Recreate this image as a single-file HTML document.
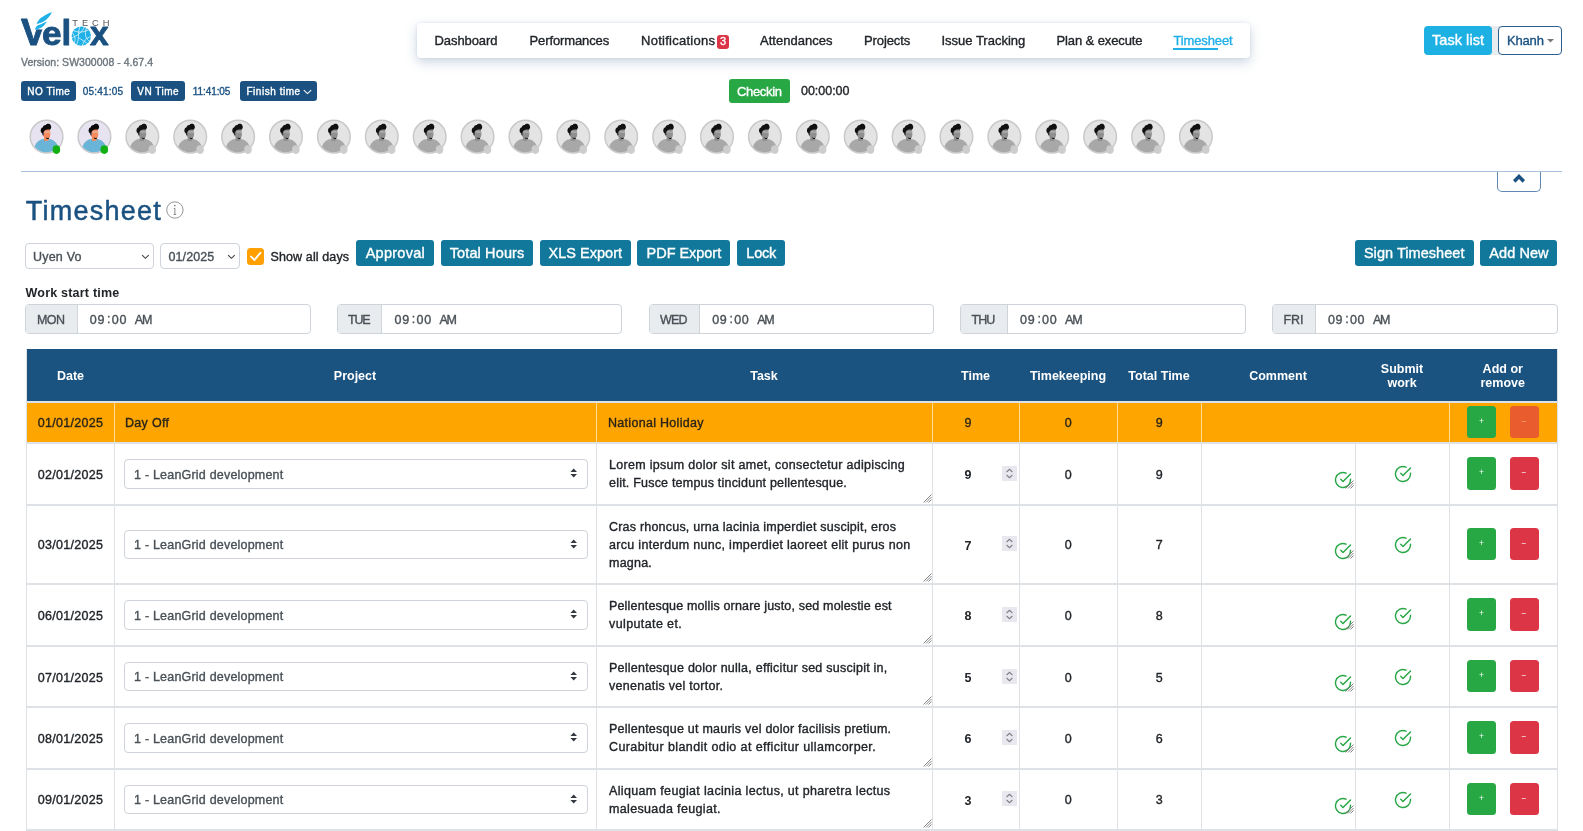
<!DOCTYPE html>
<html lang="en">
<head>
<meta charset="utf-8">
<title>Timesheet</title>
<style>
*{box-sizing:border-box}
html,body{margin:0;padding:0}
body{width:1583px;height:831px;overflow:hidden;position:relative;background:#fff;font-family:"Liberation Sans",sans-serif;font-size:12.5px;color:#212529;will-change:transform;-webkit-text-stroke:.36px currentColor}
.t{position:absolute;white-space:nowrap;display:block}
.abs{position:absolute}
.badge{position:absolute;background:#1a5180;border-radius:3px;height:20px;top:81px}
.btn{position:absolute;border-radius:3px;background:#12789b;color:#fff}
.sel{position:absolute;border:1px solid #ced4da;border-radius:4px;background:#fff}
.grp{position:absolute;top:304px;height:29.5px;border:1px solid #ced4da;border-radius:4px;background:#fff;overflow:hidden}
.grp i{position:absolute;left:0;top:0;bottom:0;background:#e9ecef;border-right:1px solid #ced4da}
</style>
</head>
<body>

<svg class="abs" style="left:16px;top:8px" width="100" height="44" viewBox="16 8 100 44" aria-label="Velox Tech">
<text transform="translate(21.08 45.35) scale(0.3738 0.3754)" font-family="Liberation Sans, sans-serif" font-weight="700" font-size="100" fill="#1a5180" stroke="#1a5180" stroke-width="2.40" stroke-linejoin="round">V</text>
<path d="M33.6 8 H56 V29.4 H33.6Z" fill="#fff"/>
<text transform="translate(41.94 45.22) scale(0.3521 0.3327)" font-family="Liberation Sans, sans-serif" font-weight="700" font-size="100" fill="#1a5180" stroke="#1a5180" stroke-width="2.63" stroke-linejoin="round">e</text>
<text transform="translate(61.51 45.35) scale(0.3481 0.3572)" font-family="Liberation Sans, sans-serif" font-weight="700" font-size="100" fill="#1a5180" stroke="#1a5180" stroke-width="2.55" stroke-linejoin="round">l</text>
<text transform="translate(90.12 45.35) scale(0.3346 0.3340)" font-family="Liberation Sans, sans-serif" font-weight="700" font-size="100" fill="#1a5180" stroke="#1a5180" stroke-width="2.69" stroke-linejoin="round">x</text>
<path d="M36.6 23.9 C38 19.5 43 15.5 52 12 C50 16 47 19.5 44 21.3 C41.5 22.8 39 23.6 36.6 23.9Z" fill="#1fb0e8"/>
<path d="M34.9 29.8 C35.4 27.5 36.5 26 38 25.2 C41 24.3 44 23.3 46.8 21.3 C45.5 24 44 26 42 27.2 C40 28.4 37.5 29.3 34.9 29.8Z" fill="#1fb0e8"/>
<circle cx="81.3" cy="36.1" r="9.7" fill="#1fb0e8"/>
<g stroke="#fff" stroke-width="0.75" fill="none" stroke-linecap="round" opacity=".9">
<path d="M73.5 30.5 C78 33 84 32.5 88.5 29.8"/><path d="M71.8 38 C77 35.5 81.5 33.5 84.5 27"/><path d="M79.8 26.6 C77.5 33 79.5 41 76.5 44.4"/><path d="M86.5 28 C84 34 86 40 89.8 41.2"/><path d="M82.5 45.6 C83.5 41 86 38 90.8 36.6"/><path d="M72.6 33 C75 36 76 40 74.2 43"/><path d="M79 38 C82 40 85 41.5 87.5 43.6"/>
</g>
<text x="72.3" y="25.5" font-family="Liberation Sans, sans-serif" font-size="9.3" fill="#5a5353" letter-spacing="3.97">TECH</text>
</svg>

<span class="t" style="left:21px;top:54.95px;height:14.7px;line-height:14.7px;font-size:10.5px;letter-spacing:0.027px;color:#6c757d;">Version: SW300008 - 4.67.4</span>
<div class="badge" style="left:21px;width:55.3px"></div>
<span class="t" style="left:27.3px;top:84.7px;height:14.0px;line-height:14.0px;font-size:10px;letter-spacing:0.508px;color:#fff;">NO Time</span>
<span class="t" style="left:82.8px;top:84.7px;height:14.0px;line-height:14.0px;font-size:10px;letter-spacing:0.196px;color:#1a5180;">05:41:05</span>
<div class="badge" style="left:131px;width:53.8px"></div>
<span class="t" style="left:137.2px;top:84.7px;height:14.0px;line-height:14.0px;font-size:10px;letter-spacing:0.526px;color:#fff;">VN Time</span>
<span class="t" style="left:192.8px;top:84.7px;height:14.0px;line-height:14.0px;font-size:10px;letter-spacing:-0.083px;color:#1a5180;">11:41:05</span>
<div class="badge" style="left:240px;width:76.6px"></div>
<span class="t" style="left:246.4px;top:84.7px;height:14.0px;line-height:14.0px;font-size:10px;letter-spacing:0.545px;color:#fff;">Finish time</span>
<svg class="abs" style="left:303px;top:88.6px" width="9" height="6" viewBox="0 0 9 6"><path d="M0.8 1.2 L4.5 4.6 L8.2 1.2" stroke="#fff" stroke-width="1.1" fill="none"/></svg>
<nav class="abs" style="left:417px;top:23px;width:833.3px;height:34.5px;background:#fff;border-radius:4px;box-shadow:0 4px 12px rgba(80,115,160,.30),0 0 3px rgba(80,115,160,.12)"></nav>
<a class="t" style="left:434.5px;top:32.2px;height:18.2px;line-height:18.2px;font-size:13px;letter-spacing:-0.075px;color:#212529;">Dashboard</a>
<a class="t" style="left:529.5px;top:32.2px;height:18.2px;line-height:18.2px;font-size:13px;letter-spacing:-0.107px;color:#212529;">Performances</a>
<a class="t" style="left:641px;top:32.2px;height:18.2px;line-height:18.2px;font-size:13px;letter-spacing:0.266px;color:#212529;">Notifications</a>
<a class="t" style="left:760px;top:32.2px;height:18.2px;line-height:18.2px;font-size:13px;letter-spacing:0.022px;color:#212529;">Attendances</a>
<a class="t" style="left:864px;top:32.2px;height:18.2px;line-height:18.2px;font-size:13px;letter-spacing:-0.102px;color:#212529;">Projects</a>
<a class="t" style="left:941.5px;top:32.2px;height:18.2px;line-height:18.2px;font-size:13px;letter-spacing:-0.005px;color:#212529;">Issue Tracking</a>
<a class="t" style="left:1056.5px;top:32.2px;height:18.2px;line-height:18.2px;font-size:13px;letter-spacing:-0.111px;color:#212529;">Plan &amp; execute</a>
<a class="t" style="left:1173.4px;top:32.2px;height:18.2px;line-height:18.2px;font-size:13px;letter-spacing:-0.114px;color:#1fb0e8;">Timesheet</a>
<div class="abs" style="left:1173.4px;top:48px;width:44.3px;height:1.5px;background:#1fb0e8"></div>
<div class="abs" style="left:717px;top:35px;width:11.8px;height:13.6px;background:#dc3545;border-radius:3px"></div>
<span class="t" style="left:719.9px;top:34.2px;height:15.4px;line-height:15.4px;font-size:11px;letter-spacing:0px;color:#fff;">3</span>
<div class="btn" style="left:729px;top:79.2px;width:61.3px;height:24px;background:#28a745"></div>
<span class="t" style="left:737px;top:82.7px;height:18.2px;line-height:18.2px;font-size:13px;letter-spacing:-0.328px;color:#fff;">Checkin</span>
<span class="t" style="left:801px;top:82.65px;height:17.5px;line-height:17.5px;font-size:12.5px;letter-spacing:-0.023px;color:#212529;">00:00:00</span>
<div class="abs" style="left:1488px;top:26px;width:12px;height:29px;background:#e9ecef"></div>
<div class="btn" style="left:1424px;top:26px;width:67.6px;height:29px;background:#1cb0e3;border-radius:4px"></div>
<span class="t" style="left:1432px;top:30.15px;height:20.3px;line-height:20.3px;font-size:14.5px;letter-spacing:0.054px;color:#fff;">Task list</span>
<div class="abs" style="left:1498.3px;top:26px;width:63.4px;height:29px;background:#fff;border:1px solid #2c5f8e;border-radius:4px"></div>
<span class="t" style="left:1506.9px;top:31.5px;height:18.2px;line-height:18.2px;font-size:13px;letter-spacing:-0.148px;color:#1a5180;">Khanh</span>
<svg class="abs" style="left:1547.3px;top:39px" width="7" height="4" viewBox="0 0 7 4"><path d="M0 0 H7 L3.5 3.6Z" fill="#777"/></svg>
<svg class="abs" style="left:0;top:110px" width="1583" height="56" viewBox="0 110 1583 56">
<g transform="translate(0.00 0)"><circle cx="46.55" cy="136.65" r="16.3" fill="#e8e3f1" stroke="#c9c9c9" stroke-width="1.5"/><path d="M34.6 146.5 C36.5 141.5 40 139.3 43.6 139 L49.2 139 C53 139.4 56.3 141.8 58.3 146.6 C55.5 150.4 51.5 152.3 46.55 152.3 C41.5 152.3 37.3 150.3 34.6 146.5Z" fill="#6ab4d8"/><path d="M42.3 129.5 C42.3 127.5 48.8 127 50 129.5 L50.4 134.5 C50.2 137 49 138.3 48.6 138.7 L48.8 140.2 C47.5 141.4 45 141.4 44 140.2 L44 137 C42.6 136 42 133 42.3 129.5Z" fill="#f58a5b"/><path d="M42 131 L43.6 131 L43.8 135.6 L42.4 135 Z" fill="#2b3a67"/><path d="M45.6 137.2 C46.8 138.2 48.2 138.3 49.2 137.4 L48.7 138.9 C47.6 139.3 46.4 138.9 45.6 137.2Z" fill="#0a0a0a"/><path d="M44.6 132 H50.6" stroke="#d9d3cf" stroke-width="0.9"/><path d="M40.9 132 C40.2 129.5 41.3 127.6 42.9 127.2 C43.2 125.6 44.7 124.9 45.8 125.1 C46.5 123.7 49.4 123.3 50.5 124.9 C51.8 126.4 51.3 128.7 49.9 129.7 C48 129.4 45.6 129.9 44.2 130.9 C43.6 131.8 43 132.8 42.2 133.6Z" fill="#0a0a0a"/><ellipse cx="56.4" cy="149.6" rx="3.8" ry="4.3" fill="#12b012"/></g>
<g transform="translate(47.89 0)"><circle cx="46.55" cy="136.65" r="16.3" fill="#e8e3f1" stroke="#c9c9c9" stroke-width="1.5"/><path d="M34.6 146.5 C36.5 141.5 40 139.3 43.6 139 L49.2 139 C53 139.4 56.3 141.8 58.3 146.6 C55.5 150.4 51.5 152.3 46.55 152.3 C41.5 152.3 37.3 150.3 34.6 146.5Z" fill="#6ab4d8"/><path d="M42.3 129.5 C42.3 127.5 48.8 127 50 129.5 L50.4 134.5 C50.2 137 49 138.3 48.6 138.7 L48.8 140.2 C47.5 141.4 45 141.4 44 140.2 L44 137 C42.6 136 42 133 42.3 129.5Z" fill="#f58a5b"/><path d="M42 131 L43.6 131 L43.8 135.6 L42.4 135 Z" fill="#2b3a67"/><path d="M45.6 137.2 C46.8 138.2 48.2 138.3 49.2 137.4 L48.7 138.9 C47.6 139.3 46.4 138.9 45.6 137.2Z" fill="#0a0a0a"/><path d="M44.6 132 H50.6" stroke="#d9d3cf" stroke-width="0.9"/><path d="M40.9 132 C40.2 129.5 41.3 127.6 42.9 127.2 C43.2 125.6 44.7 124.9 45.8 125.1 C46.5 123.7 49.4 123.3 50.5 124.9 C51.8 126.4 51.3 128.7 49.9 129.7 C48 129.4 45.6 129.9 44.2 130.9 C43.6 131.8 43 132.8 42.2 133.6Z" fill="#0a0a0a"/><ellipse cx="56.4" cy="149.6" rx="3.8" ry="4.3" fill="#12b012"/></g>
<g transform="translate(95.78 0)"><circle cx="46.55" cy="136.65" r="16.3" fill="#e4e4e4" stroke="#c9c9c9" stroke-width="1.5"/><path d="M34.6 146.5 C36.5 141.5 40 139.3 43.6 139 L49.2 139 C53 139.4 56.3 141.8 58.3 146.6 C55.5 150.4 51.5 152.3 46.55 152.3 C41.5 152.3 37.3 150.3 34.6 146.5Z" fill="#a8a8a8"/><path d="M42.3 129.5 C42.3 127.5 48.8 127 50 129.5 L50.4 134.5 C50.2 137 49 138.3 48.6 138.7 L48.8 140.2 C47.5 141.4 45 141.4 44 140.2 L44 137 C42.6 136 42 133 42.3 129.5Z" fill="#8f8f8f"/><path d="M42 131 L43.6 131 L43.8 135.6 L42.4 135 Z" fill="#3a3a3a"/><path d="M45.6 137.2 C46.8 138.2 48.2 138.3 49.2 137.4 L48.7 138.9 C47.6 139.3 46.4 138.9 45.6 137.2Z" fill="#111"/><path d="M44.6 132 H50.6" stroke="#c4c4c4" stroke-width="0.9"/><path d="M40.9 132 C40.2 129.5 41.3 127.6 42.9 127.2 C43.2 125.6 44.7 124.9 45.8 125.1 C46.5 123.7 49.4 123.3 50.5 124.9 C51.8 126.4 51.3 128.7 49.9 129.7 C48 129.4 45.6 129.9 44.2 130.9 C43.6 131.8 43 132.8 42.2 133.6Z" fill="#111"/><ellipse cx="56.4" cy="149.6" rx="3.8" ry="4.3" fill="#cdcdcd"/></g>
<g transform="translate(143.67 0)"><circle cx="46.55" cy="136.65" r="16.3" fill="#e4e4e4" stroke="#c9c9c9" stroke-width="1.5"/><path d="M34.6 146.5 C36.5 141.5 40 139.3 43.6 139 L49.2 139 C53 139.4 56.3 141.8 58.3 146.6 C55.5 150.4 51.5 152.3 46.55 152.3 C41.5 152.3 37.3 150.3 34.6 146.5Z" fill="#a8a8a8"/><path d="M42.3 129.5 C42.3 127.5 48.8 127 50 129.5 L50.4 134.5 C50.2 137 49 138.3 48.6 138.7 L48.8 140.2 C47.5 141.4 45 141.4 44 140.2 L44 137 C42.6 136 42 133 42.3 129.5Z" fill="#8f8f8f"/><path d="M42 131 L43.6 131 L43.8 135.6 L42.4 135 Z" fill="#3a3a3a"/><path d="M45.6 137.2 C46.8 138.2 48.2 138.3 49.2 137.4 L48.7 138.9 C47.6 139.3 46.4 138.9 45.6 137.2Z" fill="#111"/><path d="M44.6 132 H50.6" stroke="#c4c4c4" stroke-width="0.9"/><path d="M40.9 132 C40.2 129.5 41.3 127.6 42.9 127.2 C43.2 125.6 44.7 124.9 45.8 125.1 C46.5 123.7 49.4 123.3 50.5 124.9 C51.8 126.4 51.3 128.7 49.9 129.7 C48 129.4 45.6 129.9 44.2 130.9 C43.6 131.8 43 132.8 42.2 133.6Z" fill="#111"/><ellipse cx="56.4" cy="149.6" rx="3.8" ry="4.3" fill="#cdcdcd"/></g>
<g transform="translate(191.56 0)"><circle cx="46.55" cy="136.65" r="16.3" fill="#e4e4e4" stroke="#c9c9c9" stroke-width="1.5"/><path d="M34.6 146.5 C36.5 141.5 40 139.3 43.6 139 L49.2 139 C53 139.4 56.3 141.8 58.3 146.6 C55.5 150.4 51.5 152.3 46.55 152.3 C41.5 152.3 37.3 150.3 34.6 146.5Z" fill="#a8a8a8"/><path d="M42.3 129.5 C42.3 127.5 48.8 127 50 129.5 L50.4 134.5 C50.2 137 49 138.3 48.6 138.7 L48.8 140.2 C47.5 141.4 45 141.4 44 140.2 L44 137 C42.6 136 42 133 42.3 129.5Z" fill="#8f8f8f"/><path d="M42 131 L43.6 131 L43.8 135.6 L42.4 135 Z" fill="#3a3a3a"/><path d="M45.6 137.2 C46.8 138.2 48.2 138.3 49.2 137.4 L48.7 138.9 C47.6 139.3 46.4 138.9 45.6 137.2Z" fill="#111"/><path d="M44.6 132 H50.6" stroke="#c4c4c4" stroke-width="0.9"/><path d="M40.9 132 C40.2 129.5 41.3 127.6 42.9 127.2 C43.2 125.6 44.7 124.9 45.8 125.1 C46.5 123.7 49.4 123.3 50.5 124.9 C51.8 126.4 51.3 128.7 49.9 129.7 C48 129.4 45.6 129.9 44.2 130.9 C43.6 131.8 43 132.8 42.2 133.6Z" fill="#111"/><ellipse cx="56.4" cy="149.6" rx="3.8" ry="4.3" fill="#cdcdcd"/></g>
<g transform="translate(239.45 0)"><circle cx="46.55" cy="136.65" r="16.3" fill="#e4e4e4" stroke="#c9c9c9" stroke-width="1.5"/><path d="M34.6 146.5 C36.5 141.5 40 139.3 43.6 139 L49.2 139 C53 139.4 56.3 141.8 58.3 146.6 C55.5 150.4 51.5 152.3 46.55 152.3 C41.5 152.3 37.3 150.3 34.6 146.5Z" fill="#a8a8a8"/><path d="M42.3 129.5 C42.3 127.5 48.8 127 50 129.5 L50.4 134.5 C50.2 137 49 138.3 48.6 138.7 L48.8 140.2 C47.5 141.4 45 141.4 44 140.2 L44 137 C42.6 136 42 133 42.3 129.5Z" fill="#8f8f8f"/><path d="M42 131 L43.6 131 L43.8 135.6 L42.4 135 Z" fill="#3a3a3a"/><path d="M45.6 137.2 C46.8 138.2 48.2 138.3 49.2 137.4 L48.7 138.9 C47.6 139.3 46.4 138.9 45.6 137.2Z" fill="#111"/><path d="M44.6 132 H50.6" stroke="#c4c4c4" stroke-width="0.9"/><path d="M40.9 132 C40.2 129.5 41.3 127.6 42.9 127.2 C43.2 125.6 44.7 124.9 45.8 125.1 C46.5 123.7 49.4 123.3 50.5 124.9 C51.8 126.4 51.3 128.7 49.9 129.7 C48 129.4 45.6 129.9 44.2 130.9 C43.6 131.8 43 132.8 42.2 133.6Z" fill="#111"/><ellipse cx="56.4" cy="149.6" rx="3.8" ry="4.3" fill="#cdcdcd"/></g>
<g transform="translate(287.34 0)"><circle cx="46.55" cy="136.65" r="16.3" fill="#e4e4e4" stroke="#c9c9c9" stroke-width="1.5"/><path d="M34.6 146.5 C36.5 141.5 40 139.3 43.6 139 L49.2 139 C53 139.4 56.3 141.8 58.3 146.6 C55.5 150.4 51.5 152.3 46.55 152.3 C41.5 152.3 37.3 150.3 34.6 146.5Z" fill="#a8a8a8"/><path d="M42.3 129.5 C42.3 127.5 48.8 127 50 129.5 L50.4 134.5 C50.2 137 49 138.3 48.6 138.7 L48.8 140.2 C47.5 141.4 45 141.4 44 140.2 L44 137 C42.6 136 42 133 42.3 129.5Z" fill="#8f8f8f"/><path d="M42 131 L43.6 131 L43.8 135.6 L42.4 135 Z" fill="#3a3a3a"/><path d="M45.6 137.2 C46.8 138.2 48.2 138.3 49.2 137.4 L48.7 138.9 C47.6 139.3 46.4 138.9 45.6 137.2Z" fill="#111"/><path d="M44.6 132 H50.6" stroke="#c4c4c4" stroke-width="0.9"/><path d="M40.9 132 C40.2 129.5 41.3 127.6 42.9 127.2 C43.2 125.6 44.7 124.9 45.8 125.1 C46.5 123.7 49.4 123.3 50.5 124.9 C51.8 126.4 51.3 128.7 49.9 129.7 C48 129.4 45.6 129.9 44.2 130.9 C43.6 131.8 43 132.8 42.2 133.6Z" fill="#111"/><ellipse cx="56.4" cy="149.6" rx="3.8" ry="4.3" fill="#cdcdcd"/></g>
<g transform="translate(335.23 0)"><circle cx="46.55" cy="136.65" r="16.3" fill="#e4e4e4" stroke="#c9c9c9" stroke-width="1.5"/><path d="M34.6 146.5 C36.5 141.5 40 139.3 43.6 139 L49.2 139 C53 139.4 56.3 141.8 58.3 146.6 C55.5 150.4 51.5 152.3 46.55 152.3 C41.5 152.3 37.3 150.3 34.6 146.5Z" fill="#a8a8a8"/><path d="M42.3 129.5 C42.3 127.5 48.8 127 50 129.5 L50.4 134.5 C50.2 137 49 138.3 48.6 138.7 L48.8 140.2 C47.5 141.4 45 141.4 44 140.2 L44 137 C42.6 136 42 133 42.3 129.5Z" fill="#8f8f8f"/><path d="M42 131 L43.6 131 L43.8 135.6 L42.4 135 Z" fill="#3a3a3a"/><path d="M45.6 137.2 C46.8 138.2 48.2 138.3 49.2 137.4 L48.7 138.9 C47.6 139.3 46.4 138.9 45.6 137.2Z" fill="#111"/><path d="M44.6 132 H50.6" stroke="#c4c4c4" stroke-width="0.9"/><path d="M40.9 132 C40.2 129.5 41.3 127.6 42.9 127.2 C43.2 125.6 44.7 124.9 45.8 125.1 C46.5 123.7 49.4 123.3 50.5 124.9 C51.8 126.4 51.3 128.7 49.9 129.7 C48 129.4 45.6 129.9 44.2 130.9 C43.6 131.8 43 132.8 42.2 133.6Z" fill="#111"/><ellipse cx="56.4" cy="149.6" rx="3.8" ry="4.3" fill="#cdcdcd"/></g>
<g transform="translate(383.12 0)"><circle cx="46.55" cy="136.65" r="16.3" fill="#e4e4e4" stroke="#c9c9c9" stroke-width="1.5"/><path d="M34.6 146.5 C36.5 141.5 40 139.3 43.6 139 L49.2 139 C53 139.4 56.3 141.8 58.3 146.6 C55.5 150.4 51.5 152.3 46.55 152.3 C41.5 152.3 37.3 150.3 34.6 146.5Z" fill="#a8a8a8"/><path d="M42.3 129.5 C42.3 127.5 48.8 127 50 129.5 L50.4 134.5 C50.2 137 49 138.3 48.6 138.7 L48.8 140.2 C47.5 141.4 45 141.4 44 140.2 L44 137 C42.6 136 42 133 42.3 129.5Z" fill="#8f8f8f"/><path d="M42 131 L43.6 131 L43.8 135.6 L42.4 135 Z" fill="#3a3a3a"/><path d="M45.6 137.2 C46.8 138.2 48.2 138.3 49.2 137.4 L48.7 138.9 C47.6 139.3 46.4 138.9 45.6 137.2Z" fill="#111"/><path d="M44.6 132 H50.6" stroke="#c4c4c4" stroke-width="0.9"/><path d="M40.9 132 C40.2 129.5 41.3 127.6 42.9 127.2 C43.2 125.6 44.7 124.9 45.8 125.1 C46.5 123.7 49.4 123.3 50.5 124.9 C51.8 126.4 51.3 128.7 49.9 129.7 C48 129.4 45.6 129.9 44.2 130.9 C43.6 131.8 43 132.8 42.2 133.6Z" fill="#111"/><ellipse cx="56.4" cy="149.6" rx="3.8" ry="4.3" fill="#cdcdcd"/></g>
<g transform="translate(431.01 0)"><circle cx="46.55" cy="136.65" r="16.3" fill="#e4e4e4" stroke="#c9c9c9" stroke-width="1.5"/><path d="M34.6 146.5 C36.5 141.5 40 139.3 43.6 139 L49.2 139 C53 139.4 56.3 141.8 58.3 146.6 C55.5 150.4 51.5 152.3 46.55 152.3 C41.5 152.3 37.3 150.3 34.6 146.5Z" fill="#a8a8a8"/><path d="M42.3 129.5 C42.3 127.5 48.8 127 50 129.5 L50.4 134.5 C50.2 137 49 138.3 48.6 138.7 L48.8 140.2 C47.5 141.4 45 141.4 44 140.2 L44 137 C42.6 136 42 133 42.3 129.5Z" fill="#8f8f8f"/><path d="M42 131 L43.6 131 L43.8 135.6 L42.4 135 Z" fill="#3a3a3a"/><path d="M45.6 137.2 C46.8 138.2 48.2 138.3 49.2 137.4 L48.7 138.9 C47.6 139.3 46.4 138.9 45.6 137.2Z" fill="#111"/><path d="M44.6 132 H50.6" stroke="#c4c4c4" stroke-width="0.9"/><path d="M40.9 132 C40.2 129.5 41.3 127.6 42.9 127.2 C43.2 125.6 44.7 124.9 45.8 125.1 C46.5 123.7 49.4 123.3 50.5 124.9 C51.8 126.4 51.3 128.7 49.9 129.7 C48 129.4 45.6 129.9 44.2 130.9 C43.6 131.8 43 132.8 42.2 133.6Z" fill="#111"/><ellipse cx="56.4" cy="149.6" rx="3.8" ry="4.3" fill="#cdcdcd"/></g>
<g transform="translate(478.90 0)"><circle cx="46.55" cy="136.65" r="16.3" fill="#e4e4e4" stroke="#c9c9c9" stroke-width="1.5"/><path d="M34.6 146.5 C36.5 141.5 40 139.3 43.6 139 L49.2 139 C53 139.4 56.3 141.8 58.3 146.6 C55.5 150.4 51.5 152.3 46.55 152.3 C41.5 152.3 37.3 150.3 34.6 146.5Z" fill="#a8a8a8"/><path d="M42.3 129.5 C42.3 127.5 48.8 127 50 129.5 L50.4 134.5 C50.2 137 49 138.3 48.6 138.7 L48.8 140.2 C47.5 141.4 45 141.4 44 140.2 L44 137 C42.6 136 42 133 42.3 129.5Z" fill="#8f8f8f"/><path d="M42 131 L43.6 131 L43.8 135.6 L42.4 135 Z" fill="#3a3a3a"/><path d="M45.6 137.2 C46.8 138.2 48.2 138.3 49.2 137.4 L48.7 138.9 C47.6 139.3 46.4 138.9 45.6 137.2Z" fill="#111"/><path d="M44.6 132 H50.6" stroke="#c4c4c4" stroke-width="0.9"/><path d="M40.9 132 C40.2 129.5 41.3 127.6 42.9 127.2 C43.2 125.6 44.7 124.9 45.8 125.1 C46.5 123.7 49.4 123.3 50.5 124.9 C51.8 126.4 51.3 128.7 49.9 129.7 C48 129.4 45.6 129.9 44.2 130.9 C43.6 131.8 43 132.8 42.2 133.6Z" fill="#111"/><ellipse cx="56.4" cy="149.6" rx="3.8" ry="4.3" fill="#cdcdcd"/></g>
<g transform="translate(526.79 0)"><circle cx="46.55" cy="136.65" r="16.3" fill="#e4e4e4" stroke="#c9c9c9" stroke-width="1.5"/><path d="M34.6 146.5 C36.5 141.5 40 139.3 43.6 139 L49.2 139 C53 139.4 56.3 141.8 58.3 146.6 C55.5 150.4 51.5 152.3 46.55 152.3 C41.5 152.3 37.3 150.3 34.6 146.5Z" fill="#a8a8a8"/><path d="M42.3 129.5 C42.3 127.5 48.8 127 50 129.5 L50.4 134.5 C50.2 137 49 138.3 48.6 138.7 L48.8 140.2 C47.5 141.4 45 141.4 44 140.2 L44 137 C42.6 136 42 133 42.3 129.5Z" fill="#8f8f8f"/><path d="M42 131 L43.6 131 L43.8 135.6 L42.4 135 Z" fill="#3a3a3a"/><path d="M45.6 137.2 C46.8 138.2 48.2 138.3 49.2 137.4 L48.7 138.9 C47.6 139.3 46.4 138.9 45.6 137.2Z" fill="#111"/><path d="M44.6 132 H50.6" stroke="#c4c4c4" stroke-width="0.9"/><path d="M40.9 132 C40.2 129.5 41.3 127.6 42.9 127.2 C43.2 125.6 44.7 124.9 45.8 125.1 C46.5 123.7 49.4 123.3 50.5 124.9 C51.8 126.4 51.3 128.7 49.9 129.7 C48 129.4 45.6 129.9 44.2 130.9 C43.6 131.8 43 132.8 42.2 133.6Z" fill="#111"/><ellipse cx="56.4" cy="149.6" rx="3.8" ry="4.3" fill="#cdcdcd"/></g>
<g transform="translate(574.68 0)"><circle cx="46.55" cy="136.65" r="16.3" fill="#e4e4e4" stroke="#c9c9c9" stroke-width="1.5"/><path d="M34.6 146.5 C36.5 141.5 40 139.3 43.6 139 L49.2 139 C53 139.4 56.3 141.8 58.3 146.6 C55.5 150.4 51.5 152.3 46.55 152.3 C41.5 152.3 37.3 150.3 34.6 146.5Z" fill="#a8a8a8"/><path d="M42.3 129.5 C42.3 127.5 48.8 127 50 129.5 L50.4 134.5 C50.2 137 49 138.3 48.6 138.7 L48.8 140.2 C47.5 141.4 45 141.4 44 140.2 L44 137 C42.6 136 42 133 42.3 129.5Z" fill="#8f8f8f"/><path d="M42 131 L43.6 131 L43.8 135.6 L42.4 135 Z" fill="#3a3a3a"/><path d="M45.6 137.2 C46.8 138.2 48.2 138.3 49.2 137.4 L48.7 138.9 C47.6 139.3 46.4 138.9 45.6 137.2Z" fill="#111"/><path d="M44.6 132 H50.6" stroke="#c4c4c4" stroke-width="0.9"/><path d="M40.9 132 C40.2 129.5 41.3 127.6 42.9 127.2 C43.2 125.6 44.7 124.9 45.8 125.1 C46.5 123.7 49.4 123.3 50.5 124.9 C51.8 126.4 51.3 128.7 49.9 129.7 C48 129.4 45.6 129.9 44.2 130.9 C43.6 131.8 43 132.8 42.2 133.6Z" fill="#111"/><ellipse cx="56.4" cy="149.6" rx="3.8" ry="4.3" fill="#cdcdcd"/></g>
<g transform="translate(622.57 0)"><circle cx="46.55" cy="136.65" r="16.3" fill="#e4e4e4" stroke="#c9c9c9" stroke-width="1.5"/><path d="M34.6 146.5 C36.5 141.5 40 139.3 43.6 139 L49.2 139 C53 139.4 56.3 141.8 58.3 146.6 C55.5 150.4 51.5 152.3 46.55 152.3 C41.5 152.3 37.3 150.3 34.6 146.5Z" fill="#a8a8a8"/><path d="M42.3 129.5 C42.3 127.5 48.8 127 50 129.5 L50.4 134.5 C50.2 137 49 138.3 48.6 138.7 L48.8 140.2 C47.5 141.4 45 141.4 44 140.2 L44 137 C42.6 136 42 133 42.3 129.5Z" fill="#8f8f8f"/><path d="M42 131 L43.6 131 L43.8 135.6 L42.4 135 Z" fill="#3a3a3a"/><path d="M45.6 137.2 C46.8 138.2 48.2 138.3 49.2 137.4 L48.7 138.9 C47.6 139.3 46.4 138.9 45.6 137.2Z" fill="#111"/><path d="M44.6 132 H50.6" stroke="#c4c4c4" stroke-width="0.9"/><path d="M40.9 132 C40.2 129.5 41.3 127.6 42.9 127.2 C43.2 125.6 44.7 124.9 45.8 125.1 C46.5 123.7 49.4 123.3 50.5 124.9 C51.8 126.4 51.3 128.7 49.9 129.7 C48 129.4 45.6 129.9 44.2 130.9 C43.6 131.8 43 132.8 42.2 133.6Z" fill="#111"/><ellipse cx="56.4" cy="149.6" rx="3.8" ry="4.3" fill="#cdcdcd"/></g>
<g transform="translate(670.46 0)"><circle cx="46.55" cy="136.65" r="16.3" fill="#e4e4e4" stroke="#c9c9c9" stroke-width="1.5"/><path d="M34.6 146.5 C36.5 141.5 40 139.3 43.6 139 L49.2 139 C53 139.4 56.3 141.8 58.3 146.6 C55.5 150.4 51.5 152.3 46.55 152.3 C41.5 152.3 37.3 150.3 34.6 146.5Z" fill="#a8a8a8"/><path d="M42.3 129.5 C42.3 127.5 48.8 127 50 129.5 L50.4 134.5 C50.2 137 49 138.3 48.6 138.7 L48.8 140.2 C47.5 141.4 45 141.4 44 140.2 L44 137 C42.6 136 42 133 42.3 129.5Z" fill="#8f8f8f"/><path d="M42 131 L43.6 131 L43.8 135.6 L42.4 135 Z" fill="#3a3a3a"/><path d="M45.6 137.2 C46.8 138.2 48.2 138.3 49.2 137.4 L48.7 138.9 C47.6 139.3 46.4 138.9 45.6 137.2Z" fill="#111"/><path d="M44.6 132 H50.6" stroke="#c4c4c4" stroke-width="0.9"/><path d="M40.9 132 C40.2 129.5 41.3 127.6 42.9 127.2 C43.2 125.6 44.7 124.9 45.8 125.1 C46.5 123.7 49.4 123.3 50.5 124.9 C51.8 126.4 51.3 128.7 49.9 129.7 C48 129.4 45.6 129.9 44.2 130.9 C43.6 131.8 43 132.8 42.2 133.6Z" fill="#111"/><ellipse cx="56.4" cy="149.6" rx="3.8" ry="4.3" fill="#cdcdcd"/></g>
<g transform="translate(718.35 0)"><circle cx="46.55" cy="136.65" r="16.3" fill="#e4e4e4" stroke="#c9c9c9" stroke-width="1.5"/><path d="M34.6 146.5 C36.5 141.5 40 139.3 43.6 139 L49.2 139 C53 139.4 56.3 141.8 58.3 146.6 C55.5 150.4 51.5 152.3 46.55 152.3 C41.5 152.3 37.3 150.3 34.6 146.5Z" fill="#a8a8a8"/><path d="M42.3 129.5 C42.3 127.5 48.8 127 50 129.5 L50.4 134.5 C50.2 137 49 138.3 48.6 138.7 L48.8 140.2 C47.5 141.4 45 141.4 44 140.2 L44 137 C42.6 136 42 133 42.3 129.5Z" fill="#8f8f8f"/><path d="M42 131 L43.6 131 L43.8 135.6 L42.4 135 Z" fill="#3a3a3a"/><path d="M45.6 137.2 C46.8 138.2 48.2 138.3 49.2 137.4 L48.7 138.9 C47.6 139.3 46.4 138.9 45.6 137.2Z" fill="#111"/><path d="M44.6 132 H50.6" stroke="#c4c4c4" stroke-width="0.9"/><path d="M40.9 132 C40.2 129.5 41.3 127.6 42.9 127.2 C43.2 125.6 44.7 124.9 45.8 125.1 C46.5 123.7 49.4 123.3 50.5 124.9 C51.8 126.4 51.3 128.7 49.9 129.7 C48 129.4 45.6 129.9 44.2 130.9 C43.6 131.8 43 132.8 42.2 133.6Z" fill="#111"/><ellipse cx="56.4" cy="149.6" rx="3.8" ry="4.3" fill="#cdcdcd"/></g>
<g transform="translate(766.24 0)"><circle cx="46.55" cy="136.65" r="16.3" fill="#e4e4e4" stroke="#c9c9c9" stroke-width="1.5"/><path d="M34.6 146.5 C36.5 141.5 40 139.3 43.6 139 L49.2 139 C53 139.4 56.3 141.8 58.3 146.6 C55.5 150.4 51.5 152.3 46.55 152.3 C41.5 152.3 37.3 150.3 34.6 146.5Z" fill="#a8a8a8"/><path d="M42.3 129.5 C42.3 127.5 48.8 127 50 129.5 L50.4 134.5 C50.2 137 49 138.3 48.6 138.7 L48.8 140.2 C47.5 141.4 45 141.4 44 140.2 L44 137 C42.6 136 42 133 42.3 129.5Z" fill="#8f8f8f"/><path d="M42 131 L43.6 131 L43.8 135.6 L42.4 135 Z" fill="#3a3a3a"/><path d="M45.6 137.2 C46.8 138.2 48.2 138.3 49.2 137.4 L48.7 138.9 C47.6 139.3 46.4 138.9 45.6 137.2Z" fill="#111"/><path d="M44.6 132 H50.6" stroke="#c4c4c4" stroke-width="0.9"/><path d="M40.9 132 C40.2 129.5 41.3 127.6 42.9 127.2 C43.2 125.6 44.7 124.9 45.8 125.1 C46.5 123.7 49.4 123.3 50.5 124.9 C51.8 126.4 51.3 128.7 49.9 129.7 C48 129.4 45.6 129.9 44.2 130.9 C43.6 131.8 43 132.8 42.2 133.6Z" fill="#111"/><ellipse cx="56.4" cy="149.6" rx="3.8" ry="4.3" fill="#cdcdcd"/></g>
<g transform="translate(814.13 0)"><circle cx="46.55" cy="136.65" r="16.3" fill="#e4e4e4" stroke="#c9c9c9" stroke-width="1.5"/><path d="M34.6 146.5 C36.5 141.5 40 139.3 43.6 139 L49.2 139 C53 139.4 56.3 141.8 58.3 146.6 C55.5 150.4 51.5 152.3 46.55 152.3 C41.5 152.3 37.3 150.3 34.6 146.5Z" fill="#a8a8a8"/><path d="M42.3 129.5 C42.3 127.5 48.8 127 50 129.5 L50.4 134.5 C50.2 137 49 138.3 48.6 138.7 L48.8 140.2 C47.5 141.4 45 141.4 44 140.2 L44 137 C42.6 136 42 133 42.3 129.5Z" fill="#8f8f8f"/><path d="M42 131 L43.6 131 L43.8 135.6 L42.4 135 Z" fill="#3a3a3a"/><path d="M45.6 137.2 C46.8 138.2 48.2 138.3 49.2 137.4 L48.7 138.9 C47.6 139.3 46.4 138.9 45.6 137.2Z" fill="#111"/><path d="M44.6 132 H50.6" stroke="#c4c4c4" stroke-width="0.9"/><path d="M40.9 132 C40.2 129.5 41.3 127.6 42.9 127.2 C43.2 125.6 44.7 124.9 45.8 125.1 C46.5 123.7 49.4 123.3 50.5 124.9 C51.8 126.4 51.3 128.7 49.9 129.7 C48 129.4 45.6 129.9 44.2 130.9 C43.6 131.8 43 132.8 42.2 133.6Z" fill="#111"/><ellipse cx="56.4" cy="149.6" rx="3.8" ry="4.3" fill="#cdcdcd"/></g>
<g transform="translate(862.02 0)"><circle cx="46.55" cy="136.65" r="16.3" fill="#e4e4e4" stroke="#c9c9c9" stroke-width="1.5"/><path d="M34.6 146.5 C36.5 141.5 40 139.3 43.6 139 L49.2 139 C53 139.4 56.3 141.8 58.3 146.6 C55.5 150.4 51.5 152.3 46.55 152.3 C41.5 152.3 37.3 150.3 34.6 146.5Z" fill="#a8a8a8"/><path d="M42.3 129.5 C42.3 127.5 48.8 127 50 129.5 L50.4 134.5 C50.2 137 49 138.3 48.6 138.7 L48.8 140.2 C47.5 141.4 45 141.4 44 140.2 L44 137 C42.6 136 42 133 42.3 129.5Z" fill="#8f8f8f"/><path d="M42 131 L43.6 131 L43.8 135.6 L42.4 135 Z" fill="#3a3a3a"/><path d="M45.6 137.2 C46.8 138.2 48.2 138.3 49.2 137.4 L48.7 138.9 C47.6 139.3 46.4 138.9 45.6 137.2Z" fill="#111"/><path d="M44.6 132 H50.6" stroke="#c4c4c4" stroke-width="0.9"/><path d="M40.9 132 C40.2 129.5 41.3 127.6 42.9 127.2 C43.2 125.6 44.7 124.9 45.8 125.1 C46.5 123.7 49.4 123.3 50.5 124.9 C51.8 126.4 51.3 128.7 49.9 129.7 C48 129.4 45.6 129.9 44.2 130.9 C43.6 131.8 43 132.8 42.2 133.6Z" fill="#111"/><ellipse cx="56.4" cy="149.6" rx="3.8" ry="4.3" fill="#cdcdcd"/></g>
<g transform="translate(909.91 0)"><circle cx="46.55" cy="136.65" r="16.3" fill="#e4e4e4" stroke="#c9c9c9" stroke-width="1.5"/><path d="M34.6 146.5 C36.5 141.5 40 139.3 43.6 139 L49.2 139 C53 139.4 56.3 141.8 58.3 146.6 C55.5 150.4 51.5 152.3 46.55 152.3 C41.5 152.3 37.3 150.3 34.6 146.5Z" fill="#a8a8a8"/><path d="M42.3 129.5 C42.3 127.5 48.8 127 50 129.5 L50.4 134.5 C50.2 137 49 138.3 48.6 138.7 L48.8 140.2 C47.5 141.4 45 141.4 44 140.2 L44 137 C42.6 136 42 133 42.3 129.5Z" fill="#8f8f8f"/><path d="M42 131 L43.6 131 L43.8 135.6 L42.4 135 Z" fill="#3a3a3a"/><path d="M45.6 137.2 C46.8 138.2 48.2 138.3 49.2 137.4 L48.7 138.9 C47.6 139.3 46.4 138.9 45.6 137.2Z" fill="#111"/><path d="M44.6 132 H50.6" stroke="#c4c4c4" stroke-width="0.9"/><path d="M40.9 132 C40.2 129.5 41.3 127.6 42.9 127.2 C43.2 125.6 44.7 124.9 45.8 125.1 C46.5 123.7 49.4 123.3 50.5 124.9 C51.8 126.4 51.3 128.7 49.9 129.7 C48 129.4 45.6 129.9 44.2 130.9 C43.6 131.8 43 132.8 42.2 133.6Z" fill="#111"/><ellipse cx="56.4" cy="149.6" rx="3.8" ry="4.3" fill="#cdcdcd"/></g>
<g transform="translate(957.80 0)"><circle cx="46.55" cy="136.65" r="16.3" fill="#e4e4e4" stroke="#c9c9c9" stroke-width="1.5"/><path d="M34.6 146.5 C36.5 141.5 40 139.3 43.6 139 L49.2 139 C53 139.4 56.3 141.8 58.3 146.6 C55.5 150.4 51.5 152.3 46.55 152.3 C41.5 152.3 37.3 150.3 34.6 146.5Z" fill="#a8a8a8"/><path d="M42.3 129.5 C42.3 127.5 48.8 127 50 129.5 L50.4 134.5 C50.2 137 49 138.3 48.6 138.7 L48.8 140.2 C47.5 141.4 45 141.4 44 140.2 L44 137 C42.6 136 42 133 42.3 129.5Z" fill="#8f8f8f"/><path d="M42 131 L43.6 131 L43.8 135.6 L42.4 135 Z" fill="#3a3a3a"/><path d="M45.6 137.2 C46.8 138.2 48.2 138.3 49.2 137.4 L48.7 138.9 C47.6 139.3 46.4 138.9 45.6 137.2Z" fill="#111"/><path d="M44.6 132 H50.6" stroke="#c4c4c4" stroke-width="0.9"/><path d="M40.9 132 C40.2 129.5 41.3 127.6 42.9 127.2 C43.2 125.6 44.7 124.9 45.8 125.1 C46.5 123.7 49.4 123.3 50.5 124.9 C51.8 126.4 51.3 128.7 49.9 129.7 C48 129.4 45.6 129.9 44.2 130.9 C43.6 131.8 43 132.8 42.2 133.6Z" fill="#111"/><ellipse cx="56.4" cy="149.6" rx="3.8" ry="4.3" fill="#cdcdcd"/></g>
<g transform="translate(1005.69 0)"><circle cx="46.55" cy="136.65" r="16.3" fill="#e4e4e4" stroke="#c9c9c9" stroke-width="1.5"/><path d="M34.6 146.5 C36.5 141.5 40 139.3 43.6 139 L49.2 139 C53 139.4 56.3 141.8 58.3 146.6 C55.5 150.4 51.5 152.3 46.55 152.3 C41.5 152.3 37.3 150.3 34.6 146.5Z" fill="#a8a8a8"/><path d="M42.3 129.5 C42.3 127.5 48.8 127 50 129.5 L50.4 134.5 C50.2 137 49 138.3 48.6 138.7 L48.8 140.2 C47.5 141.4 45 141.4 44 140.2 L44 137 C42.6 136 42 133 42.3 129.5Z" fill="#8f8f8f"/><path d="M42 131 L43.6 131 L43.8 135.6 L42.4 135 Z" fill="#3a3a3a"/><path d="M45.6 137.2 C46.8 138.2 48.2 138.3 49.2 137.4 L48.7 138.9 C47.6 139.3 46.4 138.9 45.6 137.2Z" fill="#111"/><path d="M44.6 132 H50.6" stroke="#c4c4c4" stroke-width="0.9"/><path d="M40.9 132 C40.2 129.5 41.3 127.6 42.9 127.2 C43.2 125.6 44.7 124.9 45.8 125.1 C46.5 123.7 49.4 123.3 50.5 124.9 C51.8 126.4 51.3 128.7 49.9 129.7 C48 129.4 45.6 129.9 44.2 130.9 C43.6 131.8 43 132.8 42.2 133.6Z" fill="#111"/><ellipse cx="56.4" cy="149.6" rx="3.8" ry="4.3" fill="#cdcdcd"/></g>
<g transform="translate(1053.58 0)"><circle cx="46.55" cy="136.65" r="16.3" fill="#e4e4e4" stroke="#c9c9c9" stroke-width="1.5"/><path d="M34.6 146.5 C36.5 141.5 40 139.3 43.6 139 L49.2 139 C53 139.4 56.3 141.8 58.3 146.6 C55.5 150.4 51.5 152.3 46.55 152.3 C41.5 152.3 37.3 150.3 34.6 146.5Z" fill="#a8a8a8"/><path d="M42.3 129.5 C42.3 127.5 48.8 127 50 129.5 L50.4 134.5 C50.2 137 49 138.3 48.6 138.7 L48.8 140.2 C47.5 141.4 45 141.4 44 140.2 L44 137 C42.6 136 42 133 42.3 129.5Z" fill="#8f8f8f"/><path d="M42 131 L43.6 131 L43.8 135.6 L42.4 135 Z" fill="#3a3a3a"/><path d="M45.6 137.2 C46.8 138.2 48.2 138.3 49.2 137.4 L48.7 138.9 C47.6 139.3 46.4 138.9 45.6 137.2Z" fill="#111"/><path d="M44.6 132 H50.6" stroke="#c4c4c4" stroke-width="0.9"/><path d="M40.9 132 C40.2 129.5 41.3 127.6 42.9 127.2 C43.2 125.6 44.7 124.9 45.8 125.1 C46.5 123.7 49.4 123.3 50.5 124.9 C51.8 126.4 51.3 128.7 49.9 129.7 C48 129.4 45.6 129.9 44.2 130.9 C43.6 131.8 43 132.8 42.2 133.6Z" fill="#111"/><ellipse cx="56.4" cy="149.6" rx="3.8" ry="4.3" fill="#cdcdcd"/></g>
<g transform="translate(1101.47 0)"><circle cx="46.55" cy="136.65" r="16.3" fill="#e4e4e4" stroke="#c9c9c9" stroke-width="1.5"/><path d="M34.6 146.5 C36.5 141.5 40 139.3 43.6 139 L49.2 139 C53 139.4 56.3 141.8 58.3 146.6 C55.5 150.4 51.5 152.3 46.55 152.3 C41.5 152.3 37.3 150.3 34.6 146.5Z" fill="#a8a8a8"/><path d="M42.3 129.5 C42.3 127.5 48.8 127 50 129.5 L50.4 134.5 C50.2 137 49 138.3 48.6 138.7 L48.8 140.2 C47.5 141.4 45 141.4 44 140.2 L44 137 C42.6 136 42 133 42.3 129.5Z" fill="#8f8f8f"/><path d="M42 131 L43.6 131 L43.8 135.6 L42.4 135 Z" fill="#3a3a3a"/><path d="M45.6 137.2 C46.8 138.2 48.2 138.3 49.2 137.4 L48.7 138.9 C47.6 139.3 46.4 138.9 45.6 137.2Z" fill="#111"/><path d="M44.6 132 H50.6" stroke="#c4c4c4" stroke-width="0.9"/><path d="M40.9 132 C40.2 129.5 41.3 127.6 42.9 127.2 C43.2 125.6 44.7 124.9 45.8 125.1 C46.5 123.7 49.4 123.3 50.5 124.9 C51.8 126.4 51.3 128.7 49.9 129.7 C48 129.4 45.6 129.9 44.2 130.9 C43.6 131.8 43 132.8 42.2 133.6Z" fill="#111"/><ellipse cx="56.4" cy="149.6" rx="3.8" ry="4.3" fill="#cdcdcd"/></g>
<g transform="translate(1149.36 0)"><circle cx="46.55" cy="136.65" r="16.3" fill="#e4e4e4" stroke="#c9c9c9" stroke-width="1.5"/><path d="M34.6 146.5 C36.5 141.5 40 139.3 43.6 139 L49.2 139 C53 139.4 56.3 141.8 58.3 146.6 C55.5 150.4 51.5 152.3 46.55 152.3 C41.5 152.3 37.3 150.3 34.6 146.5Z" fill="#a8a8a8"/><path d="M42.3 129.5 C42.3 127.5 48.8 127 50 129.5 L50.4 134.5 C50.2 137 49 138.3 48.6 138.7 L48.8 140.2 C47.5 141.4 45 141.4 44 140.2 L44 137 C42.6 136 42 133 42.3 129.5Z" fill="#8f8f8f"/><path d="M42 131 L43.6 131 L43.8 135.6 L42.4 135 Z" fill="#3a3a3a"/><path d="M45.6 137.2 C46.8 138.2 48.2 138.3 49.2 137.4 L48.7 138.9 C47.6 139.3 46.4 138.9 45.6 137.2Z" fill="#111"/><path d="M44.6 132 H50.6" stroke="#c4c4c4" stroke-width="0.9"/><path d="M40.9 132 C40.2 129.5 41.3 127.6 42.9 127.2 C43.2 125.6 44.7 124.9 45.8 125.1 C46.5 123.7 49.4 123.3 50.5 124.9 C51.8 126.4 51.3 128.7 49.9 129.7 C48 129.4 45.6 129.9 44.2 130.9 C43.6 131.8 43 132.8 42.2 133.6Z" fill="#111"/><ellipse cx="56.4" cy="149.6" rx="3.8" ry="4.3" fill="#cdcdcd"/></g>
</svg>

<div class="abs" style="left:21px;top:171px;width:1541px;height:1px;background:#a9c1dd"></div>
<div class="abs" style="left:1497px;top:172px;width:43.5px;height:19.6px;border:1px solid #5f89b3;border-top:0;border-radius:0 0 5px 5px;background:#fff"></div>
<svg class="abs" style="left:1512.7px;top:174.4px" width="12" height="9" viewBox="0 0 12 9"><path d="M6 0 L12 6 L9.6 8.7 L6 5.1 L2.4 8.7 L0 6Z" fill="#1a5180"/></svg>
<h1 class="t" style="left:25.8px;top:192.9px;height:37.8px;line-height:37.8px;font-size:27px;letter-spacing:1.244px;color:#1a5180;margin:0;font-weight:400;-webkit-text-stroke:.5px #1a5180;">Timesheet</h1>
<svg class="abs" style="left:166px;top:201px" width="18" height="18" viewBox="0 0 18 18"><circle cx="8.9" cy="9" r="8.2" fill="none" stroke="#8a8a8a" stroke-width="0.9"/><path d="M8.9 7.2 V13.6 M7.7 7.4 H8.9 M7.6 13.5 H10.2" stroke="#8a8a8a" stroke-width="1"/><circle cx="8.9" cy="4.6" r="0.85" fill="#8a8a8a"/></svg>
<div class="sel" style="left:25px;top:243px;width:128.6px;height:26px"></div>
<span class="t" style="left:33px;top:248.65px;height:17.5px;line-height:17.5px;font-size:12.5px;letter-spacing:0.208px;color:#495057;">Uyen Vo</span>
<svg class="abs" style="left:140.6px;top:254px" width="9" height="6" viewBox="0 0 9 6"><path d="M1.1 1.1 L4.4 4.3 L7.7 1.1" stroke="#444" stroke-width="1.15" fill="none"/></svg>
<div class="sel" style="left:160.2px;top:243px;width:79.6px;height:26px"></div>
<span class="t" style="left:168.5px;top:248.65px;height:17.5px;line-height:17.5px;font-size:12.5px;letter-spacing:0.094px;color:#495057;">01/2025</span>
<svg class="abs" style="left:226.9px;top:254px" width="9" height="6" viewBox="0 0 9 6"><path d="M1.1 1.1 L4.4 4.3 L7.7 1.1" stroke="#444" stroke-width="1.15" fill="none"/></svg>
<div class="abs" style="left:246.5px;top:248px;width:17.2px;height:17px;background:#ffa000;border-radius:3.5px"></div>
<svg class="abs" style="left:246.5px;top:248px" width="17.2" height="17" viewBox="0 0 17.2 17"><path d="M4 8.6 L7.5 12 L13.4 4.8" stroke="#fff" stroke-width="1.9" fill="none" stroke-linecap="round" stroke-linejoin="round"/></svg>
<span class="t" style="left:270.5px;top:248.85px;height:17.5px;line-height:17.5px;font-size:12.5px;letter-spacing:0.115px;color:#212529;">Show all days</span>
<div class="btn" style="left:356.3px;top:240.4px;width:77.4px;height:25.4px"></div>
<span class="t" style="left:365.7px;top:242.75px;height:20.3px;line-height:20.3px;font-size:14.5px;letter-spacing:0.253px;color:#fff;">Approval</span>
<div class="btn" style="left:440.9px;top:240.4px;width:92.1px;height:25.4px"></div>
<span class="t" style="left:449.7px;top:242.75px;height:20.3px;line-height:20.3px;font-size:14.5px;letter-spacing:0.126px;color:#fff;">Total Hours</span>
<div class="btn" style="left:540.2px;top:240.4px;width:90.6px;height:25.4px"></div>
<span class="t" style="left:548.5px;top:242.75px;height:20.3px;line-height:20.3px;font-size:14.5px;letter-spacing:0.028px;color:#fff;">XLS Export</span>
<div class="btn" style="left:637.4px;top:240.4px;width:92.4px;height:25.4px"></div>
<span class="t" style="left:646.6px;top:242.75px;height:20.3px;line-height:20.3px;font-size:14.5px;letter-spacing:-0.038px;color:#fff;">PDF Export</span>
<div class="btn" style="left:736.7px;top:240.4px;width:48.6px;height:25.4px"></div>
<span class="t" style="left:746.3px;top:242.75px;height:20.3px;line-height:20.3px;font-size:14.5px;letter-spacing:-0.21px;color:#fff;">Lock</span>
<div class="btn" style="left:1354.8px;top:240.4px;width:118.8px;height:25.4px"></div>
<span class="t" style="left:1363.9px;top:242.75px;height:20.3px;line-height:20.3px;font-size:14.5px;letter-spacing:0.05px;color:#fff;">Sign Timesheet</span>
<div class="btn" style="left:1480.4px;top:240.4px;width:76.8px;height:25.4px"></div>
<span class="t" style="left:1489.3px;top:242.75px;height:20.3px;line-height:20.3px;font-size:14.5px;letter-spacing:0.077px;color:#fff;">Add New</span>
<span class="t" style="left:25.5px;top:284.55px;height:17.5px;line-height:17.5px;font-size:12.5px;letter-spacing:0.213px;color:#212529;font-weight:700;-webkit-text-stroke:0;">Work start time</span>
<div class="grp" style="left:25px;width:285.7px"><i style="width:51.5px"></i></div>
<span class="t" style="left:37px;top:311.75px;height:17.5px;line-height:17.5px;font-size:12.5px;letter-spacing:-0.582px;color:#495057;">MON</span>
<span class="t" style="left:89.8px;top:311.75px;height:17.5px;line-height:17.5px;font-size:12.5px;letter-spacing:0.696px;color:#495057;">09</span>
<span class="t" style="left:107.1px;top:310.75px;height:17.5px;line-height:17.5px;font-size:12.5px;letter-spacing:0px;color:#495057;">:</span>
<span class="t" style="left:111.8px;top:311.75px;height:17.5px;line-height:17.5px;font-size:12.5px;letter-spacing:0.696px;color:#495057;">00</span>
<span class="t" style="left:134.8px;top:311.75px;height:17.5px;line-height:17.5px;font-size:12.5px;letter-spacing:-1.251px;color:#495057;">AM</span>
<div class="grp" style="left:336.6px;width:285.7px"><i style="width:44.6px"></i></div>
<span class="t" style="left:348px;top:311.75px;height:17.5px;line-height:17.5px;font-size:12.5px;letter-spacing:-1.2px;color:#495057;">TUE</span>
<span class="t" style="left:394.50000000000006px;top:311.75px;height:17.5px;line-height:17.5px;font-size:12.5px;letter-spacing:0.696px;color:#495057;">09</span>
<span class="t" style="left:411.80000000000007px;top:310.75px;height:17.5px;line-height:17.5px;font-size:12.5px;letter-spacing:0px;color:#495057;">:</span>
<span class="t" style="left:416.50000000000006px;top:311.75px;height:17.5px;line-height:17.5px;font-size:12.5px;letter-spacing:0.696px;color:#495057;">00</span>
<span class="t" style="left:439.50000000000006px;top:311.75px;height:17.5px;line-height:17.5px;font-size:12.5px;letter-spacing:-1.251px;color:#495057;">AM</span>
<div class="grp" style="left:648.6px;width:285.7px"><i style="width:50.3px"></i></div>
<span class="t" style="left:660px;top:311.75px;height:17.5px;line-height:17.5px;font-size:12.5px;letter-spacing:-0.832px;color:#495057;">WED</span>
<span class="t" style="left:712.1999999999999px;top:311.75px;height:17.5px;line-height:17.5px;font-size:12.5px;letter-spacing:0.696px;color:#495057;">09</span>
<span class="t" style="left:729.4999999999999px;top:310.75px;height:17.5px;line-height:17.5px;font-size:12.5px;letter-spacing:0px;color:#495057;">:</span>
<span class="t" style="left:734.1999999999999px;top:311.75px;height:17.5px;line-height:17.5px;font-size:12.5px;letter-spacing:0.696px;color:#495057;">00</span>
<span class="t" style="left:757.1999999999999px;top:311.75px;height:17.5px;line-height:17.5px;font-size:12.5px;letter-spacing:-1.251px;color:#495057;">AM</span>
<div class="grp" style="left:960.2px;width:285.7px"><i style="width:46.6px"></i></div>
<span class="t" style="left:971.6px;top:311.75px;height:17.5px;line-height:17.5px;font-size:12.5px;letter-spacing:-0.97px;color:#495057;">THU</span>
<span class="t" style="left:1020.1px;top:311.75px;height:17.5px;line-height:17.5px;font-size:12.5px;letter-spacing:0.696px;color:#495057;">09</span>
<span class="t" style="left:1037.4px;top:310.75px;height:17.5px;line-height:17.5px;font-size:12.5px;letter-spacing:0px;color:#495057;">:</span>
<span class="t" style="left:1042.1px;top:311.75px;height:17.5px;line-height:17.5px;font-size:12.5px;letter-spacing:0.696px;color:#495057;">00</span>
<span class="t" style="left:1065.1px;top:311.75px;height:17.5px;line-height:17.5px;font-size:12.5px;letter-spacing:-1.251px;color:#495057;">AM</span>
<div class="grp" style="left:1272.2px;width:285.7px"><i style="width:42.4px"></i></div>
<span class="t" style="left:1283.4px;top:311.75px;height:17.5px;line-height:17.5px;font-size:12.5px;letter-spacing:-0.068px;color:#495057;">FRI</span>
<span class="t" style="left:1327.9px;top:311.75px;height:17.5px;line-height:17.5px;font-size:12.5px;letter-spacing:0.696px;color:#495057;">09</span>
<span class="t" style="left:1345.2px;top:310.75px;height:17.5px;line-height:17.5px;font-size:12.5px;letter-spacing:0px;color:#495057;">:</span>
<span class="t" style="left:1349.9px;top:311.75px;height:17.5px;line-height:17.5px;font-size:12.5px;letter-spacing:0.696px;color:#495057;">00</span>
<span class="t" style="left:1372.9px;top:311.75px;height:17.5px;line-height:17.5px;font-size:12.5px;letter-spacing:-1.251px;color:#495057;">AM</span>

<style>
table.ts{position:absolute;left:26px;top:348.75px;width:1531.5px;border-collapse:separate;border-spacing:0;table-layout:fixed;border-left:1px solid #dee2e6;border-right:1px solid #dee2e6;border-bottom:2px solid #dee2e6;background:#fff}
table.ts th{-webkit-text-stroke:0;padding-top:2.4px!important;background:#1a5280;color:#fff;font-weight:700;font-size:12.5px;padding:0;height:52.45px;line-height:14.5px;text-align:center;vertical-align:middle}
table.ts td{padding:2px 0 0 0;border-top:2px solid #dee2e6;border-left:1px solid #dee2e6;position:relative;vertical-align:middle;text-align:center;font-size:12.5px;letter-spacing:.3px}
table.ts td:first-child{border-left:0}
table.ts tr.off td{background:#ffa500;border-left-color:#ffdc94;color:#2a2418;padding-top:0}
table.ts tr.off td:first-child{border-left:0}
table.ts td.l{text-align:left}
.psel{position:absolute;left:8.5px;right:8.5px;top:50%;margin-top:-14.75px;height:29.5px;border:1px solid #ced4da;border-radius:4px;background:#fff;color:#495057;text-align:left;line-height:27.5px;padding:1.5px 0 0 9.6px;letter-spacing:.2px}
.psel svg{position:absolute;right:9.4px;top:8.2px}
.task{display:block;position:relative;top:-.6px;padding:0 0 0 12px;line-height:18px;text-align:left;letter-spacing:.3px;white-space:nowrap}
.num{position:absolute;left:0;width:70px;top:50%;margin-top:-7.6px;line-height:18px;font-weight:700;letter-spacing:0;-webkit-text-stroke:0}
.spin{position:absolute;left:69px;top:50%;margin-top:-8px;width:15px;height:15px;background:#e8e8ee}
.hnd{position:absolute;right:0;bottom:1px}
.bp,.bm{position:absolute;top:50%;margin-top:-16.8px;width:29px;height:32.5px;border-radius:3.5px;color:#fff;font-size:8.5px;line-height:30px;text-align:center;letter-spacing:0;-webkit-text-stroke:0}
.bp{left:17px;background:#28a745}
.bm{left:59.5px;background:#dc3545}
tr.off .bm{background:#e85c2e;color:#f6b08a}
.ic{position:absolute}
</style>

<table class="ts">
<colgroup><col style="width:87px"><col style="width:482px"><col style="width:336px"><col style="width:87px"><col style="width:98px"><col style="width:84px"><col style="width:154px"><col style="width:94px"><col style="width:107.5px"></colgroup>
<thead><tr><th>Date</th><th>Project</th><th>Task</th><th>Time</th><th>Timekeeping</th><th>Total Time</th><th>Comment</th><th>Submit<br>work</th><th>Add or<br>remove</th></tr></thead>
<tbody>
<tr class="off" style="height:41px"><td>01/01/2025</td><td class="l"><span style="padding-left:10px">Day Off</span></td><td class="l"><span style="padding-left:11px">National Holiday</span></td><td><span class="num" style="font-weight:400;-webkit-text-stroke:.3px;margin-top:-8.4px">9</span></td><td>0</td><td>9</td><td colspan="2"></td><td><span class="bp">+</span><span class="bm">&minus;</span></td></tr>
<tr style="height:61.6px"><td>02/01/2025</td><td><div class="psel">1 - LeanGrid development<svg width="7.4" height="10" viewBox="0 0 7.4 10"><path d="M3.7 0.6 L7 4 H0.4Z M3.7 9.4 L7 6 H0.4Z" fill="#343a40"/></svg></div></td><td class="l"><span class="task"><span style="letter-spacing:0.294px">Lorem ipsum dolor sit amet, consectetur adipiscing</span><br><span style="letter-spacing:0.207px">elit. Fusce tempus tincidunt pellentesque.</span></span><svg class="hnd" width="9" height="9" viewBox="0 0 9 9"><path d="M8.5 0.5 L0.5 8.5 M8.5 3 L3 8.5 M8.5 5.5 L5.5 8.5" stroke="#777" stroke-width="0.9"/></svg></td><td><span class="num">9</span><span class="spin"><svg width="15" height="15" viewBox="0 0 15 15"><path d="M4.6 6 L7.5 3.3 L10.4 6 M4.6 9 L7.5 11.7 L10.4 9" stroke="#7d7d88" stroke-width="1.05" fill="none"/></svg></span></td><td>0</td><td>9</td><td><svg class="ic" style="right:3px;top:50%;margin-top:-2.5px" width="18" height="18" viewBox="0 0 24 24" fill="none" stroke="#28a745" stroke-width="1.9" stroke-linecap="round" stroke-linejoin="round"><path d="M22 11.08V12a10 10 0 1 1-5.93-9.14"/><path d="M22 4 12 14.01l-3-3"/></svg><svg class="hnd" style="bottom:auto;top:50%;margin-top:6px;right:1px" width="9" height="9" viewBox="0 0 9 9"><path d="M8.5 0.5 L0.5 8.5 M8.5 3 L3 8.5 M8.5 5.5 L5.5 8.5" stroke="#777" stroke-width="0.9"/></svg></td><td><svg class="ic" style="left:37.5px;top:50%;margin-top:-8.5px" width="18" height="18" viewBox="0 0 24 24" fill="none" stroke="#28a745" stroke-width="1.9" stroke-linecap="round" stroke-linejoin="round"><path d="M22 11.08V12a10 10 0 1 1-5.93-9.14"/><path d="M22 4 12 14.01l-3-3"/></svg></td><td><span class="bp">+</span><span class="bm">&minus;</span></td></tr>
<tr style="height:79.25px"><td>03/01/2025</td><td><div class="psel">1 - LeanGrid development<svg width="7.4" height="10" viewBox="0 0 7.4 10"><path d="M3.7 0.6 L7 4 H0.4Z M3.7 9.4 L7 6 H0.4Z" fill="#343a40"/></svg></div></td><td class="l"><span class="task"><span style="letter-spacing:0.21px">Cras rhoncus, urna lacinia imperdiet suscipit, eros</span><br><span style="letter-spacing:0.306px">arcu interdum nunc, imperdiet laoreet elit purus non</span><br><span style="letter-spacing:0.221px">magna.</span></span><svg class="hnd" width="9" height="9" viewBox="0 0 9 9"><path d="M8.5 0.5 L0.5 8.5 M8.5 3 L3 8.5 M8.5 5.5 L5.5 8.5" stroke="#777" stroke-width="0.9"/></svg></td><td><span class="num">7</span><span class="spin"><svg width="15" height="15" viewBox="0 0 15 15"><path d="M4.6 6 L7.5 3.3 L10.4 6 M4.6 9 L7.5 11.7 L10.4 9" stroke="#7d7d88" stroke-width="1.05" fill="none"/></svg></span></td><td>0</td><td>7</td><td><svg class="ic" style="right:3px;top:50%;margin-top:-2.5px" width="18" height="18" viewBox="0 0 24 24" fill="none" stroke="#28a745" stroke-width="1.9" stroke-linecap="round" stroke-linejoin="round"><path d="M22 11.08V12a10 10 0 1 1-5.93-9.14"/><path d="M22 4 12 14.01l-3-3"/></svg><svg class="hnd" style="bottom:auto;top:50%;margin-top:6px;right:1px" width="9" height="9" viewBox="0 0 9 9"><path d="M8.5 0.5 L0.5 8.5 M8.5 3 L3 8.5 M8.5 5.5 L5.5 8.5" stroke="#777" stroke-width="0.9"/></svg></td><td><svg class="ic" style="left:37.5px;top:50%;margin-top:-8.5px" width="18" height="18" viewBox="0 0 24 24" fill="none" stroke="#28a745" stroke-width="1.9" stroke-linecap="round" stroke-linejoin="round"><path d="M22 11.08V12a10 10 0 1 1-5.93-9.14"/><path d="M22 4 12 14.01l-3-3"/></svg></td><td><span class="bp">+</span><span class="bm">&minus;</span></td></tr>
<tr style="height:62px"><td>06/01/2025</td><td><div class="psel">1 - LeanGrid development<svg width="7.4" height="10" viewBox="0 0 7.4 10"><path d="M3.7 0.6 L7 4 H0.4Z M3.7 9.4 L7 6 H0.4Z" fill="#343a40"/></svg></div></td><td class="l"><span class="task"><span style="letter-spacing:0.166px">Pellentesque mollis ornare justo, sed molestie est</span><br><span style="letter-spacing:0.391px">vulputate et.</span></span><svg class="hnd" width="9" height="9" viewBox="0 0 9 9"><path d="M8.5 0.5 L0.5 8.5 M8.5 3 L3 8.5 M8.5 5.5 L5.5 8.5" stroke="#777" stroke-width="0.9"/></svg></td><td><span class="num">8</span><span class="spin"><svg width="15" height="15" viewBox="0 0 15 15"><path d="M4.6 6 L7.5 3.3 L10.4 6 M4.6 9 L7.5 11.7 L10.4 9" stroke="#7d7d88" stroke-width="1.05" fill="none"/></svg></span></td><td>0</td><td>8</td><td><svg class="ic" style="right:3px;top:50%;margin-top:-2.5px" width="18" height="18" viewBox="0 0 24 24" fill="none" stroke="#28a745" stroke-width="1.9" stroke-linecap="round" stroke-linejoin="round"><path d="M22 11.08V12a10 10 0 1 1-5.93-9.14"/><path d="M22 4 12 14.01l-3-3"/></svg><svg class="hnd" style="bottom:auto;top:50%;margin-top:6px;right:1px" width="9" height="9" viewBox="0 0 9 9"><path d="M8.5 0.5 L0.5 8.5 M8.5 3 L3 8.5 M8.5 5.5 L5.5 8.5" stroke="#777" stroke-width="0.9"/></svg></td><td><svg class="ic" style="left:37.5px;top:50%;margin-top:-8.5px" width="18" height="18" viewBox="0 0 24 24" fill="none" stroke="#28a745" stroke-width="1.9" stroke-linecap="round" stroke-linejoin="round"><path d="M22 11.08V12a10 10 0 1 1-5.93-9.14"/><path d="M22 4 12 14.01l-3-3"/></svg></td><td><span class="bp">+</span><span class="bm">&minus;</span></td></tr>
<tr style="height:61.25px"><td>07/01/2025</td><td><div class="psel">1 - LeanGrid development<svg width="7.4" height="10" viewBox="0 0 7.4 10"><path d="M3.7 0.6 L7 4 H0.4Z M3.7 9.4 L7 6 H0.4Z" fill="#343a40"/></svg></div></td><td class="l"><span class="task"><span style="letter-spacing:0.243px">Pellentesque dolor nulla, efficitur sed suscipit in,</span><br><span style="letter-spacing:0.275px">venenatis vel tortor.</span></span><svg class="hnd" width="9" height="9" viewBox="0 0 9 9"><path d="M8.5 0.5 L0.5 8.5 M8.5 3 L3 8.5 M8.5 5.5 L5.5 8.5" stroke="#777" stroke-width="0.9"/></svg></td><td><span class="num">5</span><span class="spin"><svg width="15" height="15" viewBox="0 0 15 15"><path d="M4.6 6 L7.5 3.3 L10.4 6 M4.6 9 L7.5 11.7 L10.4 9" stroke="#7d7d88" stroke-width="1.05" fill="none"/></svg></span></td><td>0</td><td>5</td><td><svg class="ic" style="right:3px;top:50%;margin-top:-2.5px" width="18" height="18" viewBox="0 0 24 24" fill="none" stroke="#28a745" stroke-width="1.9" stroke-linecap="round" stroke-linejoin="round"><path d="M22 11.08V12a10 10 0 1 1-5.93-9.14"/><path d="M22 4 12 14.01l-3-3"/></svg><svg class="hnd" style="bottom:auto;top:50%;margin-top:6px;right:1px" width="9" height="9" viewBox="0 0 9 9"><path d="M8.5 0.5 L0.5 8.5 M8.5 3 L3 8.5 M8.5 5.5 L5.5 8.5" stroke="#777" stroke-width="0.9"/></svg></td><td><svg class="ic" style="left:37.5px;top:50%;margin-top:-8.5px" width="18" height="18" viewBox="0 0 24 24" fill="none" stroke="#28a745" stroke-width="1.9" stroke-linecap="round" stroke-linejoin="round"><path d="M22 11.08V12a10 10 0 1 1-5.93-9.14"/><path d="M22 4 12 14.01l-3-3"/></svg></td><td><span class="bp">+</span><span class="bm">&minus;</span></td></tr>
<tr style="height:61.25px"><td>08/01/2025</td><td><div class="psel">1 - LeanGrid development<svg width="7.4" height="10" viewBox="0 0 7.4 10"><path d="M3.7 0.6 L7 4 H0.4Z M3.7 9.4 L7 6 H0.4Z" fill="#343a40"/></svg></div></td><td class="l"><span class="task"><span style="letter-spacing:0.235px">Pellentesque ut mauris vel dolor facilisis pretium.</span><br><span style="letter-spacing:0.402px">Curabitur blandit odio at efficitur ullamcorper.</span></span><svg class="hnd" width="9" height="9" viewBox="0 0 9 9"><path d="M8.5 0.5 L0.5 8.5 M8.5 3 L3 8.5 M8.5 5.5 L5.5 8.5" stroke="#777" stroke-width="0.9"/></svg></td><td><span class="num">6</span><span class="spin"><svg width="15" height="15" viewBox="0 0 15 15"><path d="M4.6 6 L7.5 3.3 L10.4 6 M4.6 9 L7.5 11.7 L10.4 9" stroke="#7d7d88" stroke-width="1.05" fill="none"/></svg></span></td><td>0</td><td>6</td><td><svg class="ic" style="right:3px;top:50%;margin-top:-2.5px" width="18" height="18" viewBox="0 0 24 24" fill="none" stroke="#28a745" stroke-width="1.9" stroke-linecap="round" stroke-linejoin="round"><path d="M22 11.08V12a10 10 0 1 1-5.93-9.14"/><path d="M22 4 12 14.01l-3-3"/></svg><svg class="hnd" style="bottom:auto;top:50%;margin-top:6px;right:1px" width="9" height="9" viewBox="0 0 9 9"><path d="M8.5 0.5 L0.5 8.5 M8.5 3 L3 8.5 M8.5 5.5 L5.5 8.5" stroke="#777" stroke-width="0.9"/></svg></td><td><svg class="ic" style="left:37.5px;top:50%;margin-top:-8.5px" width="18" height="18" viewBox="0 0 24 24" fill="none" stroke="#28a745" stroke-width="1.9" stroke-linecap="round" stroke-linejoin="round"><path d="M22 11.08V12a10 10 0 1 1-5.93-9.14"/><path d="M22 4 12 14.01l-3-3"/></svg></td><td><span class="bp">+</span><span class="bm">&minus;</span></td></tr>
<tr style="height:61.65px"><td>09/01/2025</td><td><div class="psel">1 - LeanGrid development<svg width="7.4" height="10" viewBox="0 0 7.4 10"><path d="M3.7 0.6 L7 4 H0.4Z M3.7 9.4 L7 6 H0.4Z" fill="#343a40"/></svg></div></td><td class="l"><span class="task"><span style="letter-spacing:0.334px">Aliquam feugiat lacinia lectus, ut pharetra lectus</span><br><span style="letter-spacing:0.345px">malesuada feugiat.</span></span><svg class="hnd" width="9" height="9" viewBox="0 0 9 9"><path d="M8.5 0.5 L0.5 8.5 M8.5 3 L3 8.5 M8.5 5.5 L5.5 8.5" stroke="#777" stroke-width="0.9"/></svg></td><td><span class="num">3</span><span class="spin"><svg width="15" height="15" viewBox="0 0 15 15"><path d="M4.6 6 L7.5 3.3 L10.4 6 M4.6 9 L7.5 11.7 L10.4 9" stroke="#7d7d88" stroke-width="1.05" fill="none"/></svg></span></td><td>0</td><td>3</td><td><svg class="ic" style="right:3px;top:50%;margin-top:-2.5px" width="18" height="18" viewBox="0 0 24 24" fill="none" stroke="#28a745" stroke-width="1.9" stroke-linecap="round" stroke-linejoin="round"><path d="M22 11.08V12a10 10 0 1 1-5.93-9.14"/><path d="M22 4 12 14.01l-3-3"/></svg><svg class="hnd" style="bottom:auto;top:50%;margin-top:6px;right:1px" width="9" height="9" viewBox="0 0 9 9"><path d="M8.5 0.5 L0.5 8.5 M8.5 3 L3 8.5 M8.5 5.5 L5.5 8.5" stroke="#777" stroke-width="0.9"/></svg></td><td><svg class="ic" style="left:37.5px;top:50%;margin-top:-8.5px" width="18" height="18" viewBox="0 0 24 24" fill="none" stroke="#28a745" stroke-width="1.9" stroke-linecap="round" stroke-linejoin="round"><path d="M22 11.08V12a10 10 0 1 1-5.93-9.14"/><path d="M22 4 12 14.01l-3-3"/></svg></td><td><span class="bp">+</span><span class="bm">&minus;</span></td></tr>
</tbody></table>
</body>
</html>
